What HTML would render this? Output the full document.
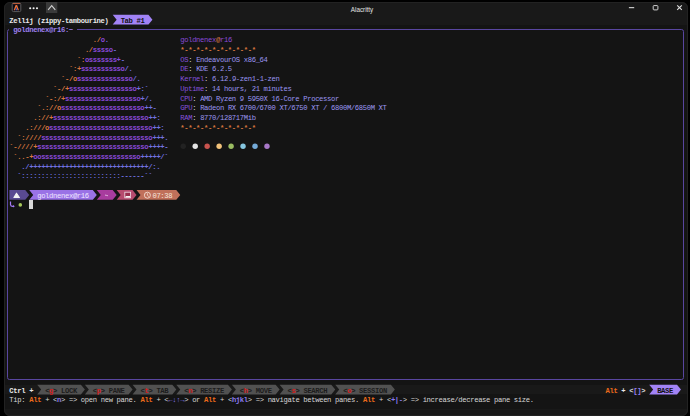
<!DOCTYPE html>
<html><head><meta charset="utf-8"><style>
html,body{margin:0;padding:0;width:690px;height:416px;overflow:hidden;background:#000}
#win{position:absolute;left:3.5px;top:1.5px;width:684px;height:414px;background:#141414;border-radius:6px;overflow:hidden}
#tb{position:absolute;left:3.5px;top:1.5px;width:684px;height:23.08px;background:#191919;border-radius:6px 6px 0 0}
#bb{position:absolute;left:3.5px;top:409px;width:684px;height:6.5px;background:#181818;border-radius:0 0 6px 6px}
#fr{position:absolute;left:3.5px;top:1.5px;width:682px;height:412px;border:1px solid #222222;border-radius:6px}
#sb{position:absolute;left:3.5px;top:384.67px;width:684px;height:9.73px;background:#191919}
#pane{position:absolute;left:7px;top:29px;width:677px;height:351px;background:#161616}
.t{position:absolute;font-family:"Liberation Mono",monospace;font-size:7.2px;letter-spacing:-0.347px;line-height:9.732px;white-space:pre;}
</style></head><body>
<div id="win"></div>
<div id="tb"></div><div id="sb"></div><div id="bb"></div><div id="fr"></div>

<svg style="position:absolute;left:0;top:0" width="690" height="20">
<rect x="12.2" y="3.2" width="8.6" height="8.4" rx="1.3" fill="#0c0c16" stroke="#646464" stroke-width="0.9"/>
<rect x="12.8" y="3.2" width="7.4" height="0.9" fill="#d0603a"/>
<path d="M13.6 10.2 L15.6 5 L17.1 5 L19 10.2 L17.6 10.2 L16.4 6.9 L15 10.2 Z" fill="#e8703a"/>
<path d="M15.5 10.2 L16.4 7.6 L17.3 10.2 Z" fill="#3a62d8"/>
<circle cx="30.2" cy="8.3" r="1.05" fill="#f2f2f2"/><circle cx="33.6" cy="8.3" r="1.05" fill="#f2f2f2"/><circle cx="37" cy="8.3" r="1.05" fill="#f2f2f2"/>
<rect x="46" y="2" width="11.3" height="11" fill="#3a3a3a"/>
<path d="M48.1 9.9 L51.7 5.6 L55.3 9.9" stroke="#d0d0d0" stroke-width="1.1" fill="none"/>
<rect x="628.9" y="7.1" width="5.3" height="1.1" fill="#d8d8d8"/>
<rect x="653.2" y="5.6" width="4.7" height="4.3" rx="0.8" stroke="#d0d0d0" stroke-width="1" fill="none"/>
<path d="M677.2 5.3 L681.8 9.9 M681.8 5.3 L677.2 9.9" stroke="#e0e0e0" stroke-width="1.1"/>
</svg>
<div style="position:absolute;left:312px;top:4.6px;width:100px;text-align:center;font:6.3px 'Liberation Sans',sans-serif;color:#e4e4e4;line-height:9px">Alacritty</div>


<div style="position:absolute;left:7px;top:29px;width:675px;height:349px;border:1px solid #5946a0;border-radius:2.5px"></div>
<div style="position:absolute;left:9.37px;top:28px;width:67.56px;height:3px;background:#141414"></div>

<svg style="position:absolute;left:0;top:0" width="690" height="416"><polygon points="112.70,14.85 148.46,14.85 152.44,19.72 148.46,24.58 112.70,24.58 116.67,19.72" fill="#a283f6"/><circle cx="183.25" cy="146.3" r="2.7" fill="#222222"/><circle cx="195.21" cy="146.3" r="2.7" fill="#e4e4e4"/><circle cx="207.17" cy="146.3" r="2.7" fill="#c9534e"/><circle cx="219.13" cy="146.3" r="2.7" fill="#f2c27a"/><circle cx="231.09" cy="146.3" r="2.7" fill="#9bbd62"/><circle cx="243.05" cy="146.3" r="2.7" fill="#86c6e0"/><circle cx="255.01" cy="146.3" r="2.7" fill="#74aad8"/><circle cx="266.97" cy="146.3" r="2.7" fill="#a878c8"/><polygon points="9.37,190.03 25.27,190.03 29.24,194.89 25.27,199.76 9.37,199.76" fill="#594a91"/><polygon points="29.24,190.03 92.83,190.03 96.80,194.89 92.83,199.76 29.24,199.76 33.22,194.89" fill="#9a72e6"/><polygon points="96.80,190.03 112.70,190.03 116.67,194.89 112.70,199.76 96.80,199.76 100.78,194.89" fill="#a83c9e"/><polygon points="116.67,190.03 132.57,190.03 136.54,194.89 132.57,199.76 116.67,199.76 120.65,194.89" fill="#b64b6e"/><polygon points="136.54,190.03 176.28,190.03 180.26,194.89 176.28,199.76 136.54,199.76 140.52,194.89" fill="#c0705a"/><circle cx="20.3" cy="204.9" r="1.8" fill="#a6c85a"/><polygon points="37.19,384.67 80.91,384.67 84.88,389.53 80.91,394.40 37.19,394.40 41.17,389.53" fill="#515151"/><polygon points="84.88,384.67 128.59,384.67 132.57,389.53 128.59,394.40 84.88,394.40 88.85,389.53" fill="#515151"/><polygon points="132.57,384.67 172.31,384.67 176.28,389.53 172.31,394.40 132.57,394.40 136.54,389.53" fill="#515151"/><polygon points="176.28,384.67 227.94,384.67 231.92,389.53 227.94,394.40 176.28,394.40 180.26,389.53" fill="#515151"/><polygon points="231.92,384.67 275.63,384.67 279.61,389.53 275.63,394.40 231.92,394.40 235.89,389.53" fill="#515151"/><polygon points="279.61,384.67 331.27,384.67 335.24,389.53 331.27,394.40 279.61,394.40 283.58,389.53" fill="#515151"/><polygon points="335.24,384.67 390.88,384.67 394.85,389.53 390.88,394.40 335.24,394.40 339.22,389.53" fill="#515151"/><polygon points="649.19,384.67 677.01,384.67 680.98,389.53 677.01,394.40 649.19,394.40 653.16,389.53" fill="#a283f6"/></svg>

<svg style="position:absolute;left:0;top:0" width="690" height="416">
<path d="M13.9 197.5 L16.5 193.2 L19.4 197.5 Z" fill="#f2f2f2" stroke="#f2f2f2" stroke-width="1.1" stroke-linejoin="round"/>
<path d="M105 195.6 Q105.8 194.6 106.5 195.4 Q107.2 196.2 108 195.2" stroke="#f0d8f0" stroke-width="0.8" fill="none"/>
<rect x="124.8" y="192.2" width="5.8" height="5.6" fill="#9a2e4e" stroke="#f0e0e8" stroke-width="0.8"/>
<rect x="125.6" y="196" width="4.4" height="1.6" fill="#f4f0f0"/>
<circle cx="147.4" cy="195.2" r="3" stroke="#f4dcd0" stroke-width="0.9" fill="none"/>
<path d="M147.4 193.3 L147.4 195.3 L148.9 196.6" stroke="#f4dcd0" stroke-width="0.8" fill="none"/>
<path d="M10.5 201.6 L10.5 204.6 Q10.7 206.3 12.6 206.3 L13.6 206.3" stroke="#a67af6" stroke-width="1.2" fill="none"/><path d="M13 204.9 L14.8 206.3 L13 207.6 Z" fill="#a67af6"/>
</svg>

<span class="t" style="left:9.37px;top:16.75px;color:#e8e8e8;font-weight:bold;">Zellij (zippy-tambourine)</span><span class="t" style="left:120.65px;top:16.75px;color:#111111;font-weight:bold;">Tab #1</span><span class="t" style="left:13.35px;top:26.48px;color:#9d80f0;font-weight:bold;">goldnenex@r16:~</span><span class="t" style="left:92.83px;top:36.21px;color:#d9773f;font-weight:bold;">./</span><span class="t" style="left:100.78px;top:36.21px;color:#8a4ad8;font-weight:bold;">o</span><span class="t" style="left:104.75px;top:36.21px;color:#7272e0;font-weight:bold;">.</span><span class="t" style="left:84.88px;top:45.95px;color:#d9773f;font-weight:bold;">./</span><span class="t" style="left:92.83px;top:45.95px;color:#8a4ad8;font-weight:bold;">sssso</span><span class="t" style="left:112.70px;top:45.95px;color:#7272e0;font-weight:bold;">-</span><span class="t" style="left:76.93px;top:55.68px;color:#d9773f;font-weight:bold;">`:</span><span class="t" style="left:84.88px;top:55.68px;color:#8a4ad8;font-weight:bold;">osssssss+</span><span class="t" style="left:120.65px;top:55.68px;color:#7272e0;font-weight:bold;">-</span><span class="t" style="left:68.98px;top:65.41px;color:#d9773f;font-weight:bold;">`:+</span><span class="t" style="left:80.91px;top:65.41px;color:#8a4ad8;font-weight:bold;">sssssssssso</span><span class="t" style="left:124.62px;top:65.41px;color:#7272e0;font-weight:bold;">/.</span><span class="t" style="left:61.04px;top:75.14px;color:#d9773f;font-weight:bold;">`-/o</span><span class="t" style="left:76.93px;top:75.14px;color:#8a4ad8;font-weight:bold;">ssssssssssssso</span><span class="t" style="left:132.57px;top:75.14px;color:#7272e0;font-weight:bold;">/.</span><span class="t" style="left:53.09px;top:84.87px;color:#d9773f;font-weight:bold;">`-/+</span><span class="t" style="left:68.98px;top:84.87px;color:#8a4ad8;font-weight:bold;">sssssssssssssssso</span><span class="t" style="left:136.54px;top:84.87px;color:#7272e0;font-weight:bold;">+:`</span><span class="t" style="left:45.14px;top:94.61px;color:#d9773f;font-weight:bold;">`-:/+</span><span class="t" style="left:65.01px;top:94.61px;color:#8a4ad8;font-weight:bold;">sssssssssssssssssso</span><span class="t" style="left:140.52px;top:94.61px;color:#7272e0;font-weight:bold;">+/.</span><span class="t" style="left:37.19px;top:104.34px;color:#d9773f;font-weight:bold;">`.://o</span><span class="t" style="left:61.04px;top:104.34px;color:#8a4ad8;font-weight:bold;">sssssssssssssssssssso</span><span class="t" style="left:144.49px;top:104.34px;color:#7272e0;font-weight:bold;">++-</span><span class="t" style="left:33.22px;top:114.07px;color:#d9773f;font-weight:bold;">.://+</span><span class="t" style="left:53.09px;top:114.07px;color:#8a4ad8;font-weight:bold;">ssssssssssssssssssssssso</span><span class="t" style="left:148.46px;top:114.07px;color:#7272e0;font-weight:bold;">++:</span><span class="t" style="left:25.27px;top:123.80px;color:#d9773f;font-weight:bold;">.:///o</span><span class="t" style="left:49.11px;top:123.80px;color:#8a4ad8;font-weight:bold;">ssssssssssssssssssssssssso</span><span class="t" style="left:152.44px;top:123.80px;color:#7272e0;font-weight:bold;">++:</span><span class="t" style="left:17.32px;top:133.53px;color:#d9773f;font-weight:bold;">`:////</span><span class="t" style="left:41.17px;top:133.53px;color:#8a4ad8;font-weight:bold;">ssssssssssssssssssssssssssso</span><span class="t" style="left:152.44px;top:133.53px;color:#7272e0;font-weight:bold;">+++.</span><span class="t" style="left:9.37px;top:143.27px;color:#d9773f;font-weight:bold;">`-////+</span><span class="t" style="left:37.19px;top:143.27px;color:#8a4ad8;font-weight:bold;">ssssssssssssssssssssssssssso</span><span class="t" style="left:148.46px;top:143.27px;color:#7272e0;font-weight:bold;">++++-</span><span class="t" style="left:13.35px;top:153.00px;color:#d9773f;font-weight:bold;">`..-+</span><span class="t" style="left:33.22px;top:153.00px;color:#8a4ad8;font-weight:bold;">oosssssssssssssssssssssssso</span><span class="t" style="left:140.52px;top:153.00px;color:#7272e0;font-weight:bold;">+++++/`</span><span class="t" style="left:21.30px;top:162.73px;color:#7272e0;font-weight:bold;">./++++++++++++++++++++++++++++++/:.</span><span class="t" style="left:17.32px;top:172.46px;color:#7272e0;font-weight:bold;">`:::::::::::::::::::::::::------``</span><span class="t" style="left:180.26px;top:36.21px;color:#8a4ad8;">goldnenex</span><span class="t" style="left:216.02px;top:36.21px;color:#d9773f;">@</span><span class="t" style="left:220.00px;top:36.21px;color:#8a4ad8;">r16</span><span class="t" style="left:180.26px;top:45.95px;color:#d9773f;font-weight:bold;">*-*-*-*-*-*-*-*-*-*</span><span class="t" style="left:180.26px;top:55.68px;color:#8652dc;">OS</span><span class="t" style="left:188.20px;top:55.68px;color:#d6d6d6;">:</span><span class="t" style="left:196.15px;top:55.68px;color:#9c96f2;">EndeavourOS x86_64</span><span class="t" style="left:180.26px;top:65.41px;color:#8652dc;">DE</span><span class="t" style="left:188.20px;top:65.41px;color:#d6d6d6;">:</span><span class="t" style="left:196.15px;top:65.41px;color:#9c96f2;">KDE 6.2.5</span><span class="t" style="left:180.26px;top:75.14px;color:#8652dc;">Kernel</span><span class="t" style="left:204.10px;top:75.14px;color:#d6d6d6;">:</span><span class="t" style="left:212.05px;top:75.14px;color:#9c96f2;">6.12.9-zen1-1-zen</span><span class="t" style="left:180.26px;top:84.87px;color:#8652dc;">Uptime</span><span class="t" style="left:204.10px;top:84.87px;color:#d6d6d6;">:</span><span class="t" style="left:212.05px;top:84.87px;color:#9c96f2;">14 hours, 21 minutes</span><span class="t" style="left:180.26px;top:94.61px;color:#8652dc;">CPU</span><span class="t" style="left:192.18px;top:94.61px;color:#d6d6d6;">:</span><span class="t" style="left:200.13px;top:94.61px;color:#9c96f2;">AMD Ryzen 9 5950X 16-Core Processor</span><span class="t" style="left:180.26px;top:104.34px;color:#8652dc;">GPU</span><span class="t" style="left:192.18px;top:104.34px;color:#d6d6d6;">:</span><span class="t" style="left:200.13px;top:104.34px;color:#9c96f2;">Radeon RX 6700/6700 XT/6750 XT / 6800M/6850M XT</span><span class="t" style="left:180.26px;top:114.07px;color:#8652dc;">RAM</span><span class="t" style="left:192.18px;top:114.07px;color:#d6d6d6;">:</span><span class="t" style="left:200.13px;top:114.07px;color:#9c96f2;">8770/128717Mib</span><span class="t" style="left:180.26px;top:123.80px;color:#d9773f;font-weight:bold;">*-*-*-*-*-*-*-*-*-*</span><span class="t" style="left:37.19px;top:191.93px;color:#efe6ff;">goldnenex@r16</span><span class="t" style="left:152.44px;top:191.93px;color:#f4e4dc;">07:38</span><div style="position:absolute;left:29.24px;top:199.76px;width:3.97px;height:9.73px;background:#d8d8d8"></div><span class="t" style="left:9.37px;top:386.57px;color:#e8e8e8;font-weight:bold;">Ctrl +</span><span class="t" style="left:45.14px;top:386.57px;color:#1c1c1c;font-weight:bold;">&lt;</span><span class="t" style="left:49.11px;top:386.57px;color:#d41a1a;font-weight:bold;">g</span><span class="t" style="left:53.09px;top:386.57px;color:#1c1c1c;font-weight:bold;">&gt;</span><span class="t" style="left:61.04px;top:386.57px;color:#1c1c1c;font-weight:bold;">LOCK</span><span class="t" style="left:92.83px;top:386.57px;color:#1c1c1c;font-weight:bold;">&lt;</span><span class="t" style="left:96.80px;top:386.57px;color:#d41a1a;font-weight:bold;">p</span><span class="t" style="left:100.78px;top:386.57px;color:#1c1c1c;font-weight:bold;">&gt;</span><span class="t" style="left:108.72px;top:386.57px;color:#1c1c1c;font-weight:bold;">PANE</span><span class="t" style="left:140.52px;top:386.57px;color:#1c1c1c;font-weight:bold;">&lt;</span><span class="t" style="left:144.49px;top:386.57px;color:#d41a1a;font-weight:bold;">t</span><span class="t" style="left:148.46px;top:386.57px;color:#1c1c1c;font-weight:bold;">&gt;</span><span class="t" style="left:156.41px;top:386.57px;color:#1c1c1c;font-weight:bold;">TAB</span><span class="t" style="left:184.23px;top:386.57px;color:#1c1c1c;font-weight:bold;">&lt;</span><span class="t" style="left:188.20px;top:386.57px;color:#d41a1a;font-weight:bold;">n</span><span class="t" style="left:192.18px;top:386.57px;color:#1c1c1c;font-weight:bold;">&gt;</span><span class="t" style="left:200.13px;top:386.57px;color:#1c1c1c;font-weight:bold;">RESIZE</span><span class="t" style="left:239.87px;top:386.57px;color:#1c1c1c;font-weight:bold;">&lt;</span><span class="t" style="left:243.84px;top:386.57px;color:#d41a1a;font-weight:bold;">h</span><span class="t" style="left:247.81px;top:386.57px;color:#1c1c1c;font-weight:bold;">&gt;</span><span class="t" style="left:255.76px;top:386.57px;color:#1c1c1c;font-weight:bold;">MOVE</span><span class="t" style="left:287.55px;top:386.57px;color:#1c1c1c;font-weight:bold;">&lt;</span><span class="t" style="left:291.53px;top:386.57px;color:#d41a1a;font-weight:bold;">s</span><span class="t" style="left:295.50px;top:386.57px;color:#1c1c1c;font-weight:bold;">&gt;</span><span class="t" style="left:303.45px;top:386.57px;color:#1c1c1c;font-weight:bold;">SEARCH</span><span class="t" style="left:343.19px;top:386.57px;color:#1c1c1c;font-weight:bold;">&lt;</span><span class="t" style="left:347.16px;top:386.57px;color:#d41a1a;font-weight:bold;">o</span><span class="t" style="left:351.14px;top:386.57px;color:#1c1c1c;font-weight:bold;">&gt;</span><span class="t" style="left:359.09px;top:386.57px;color:#1c1c1c;font-weight:bold;">SESSION</span><span class="t" style="left:605.47px;top:386.57px;color:#ec6a1a;font-weight:bold;">Alt</span><span class="t" style="left:621.37px;top:386.57px;color:#e8e8e8;font-weight:bold;">+</span><span class="t" style="left:629.32px;top:386.57px;color:#d6d6d6;font-weight:bold;">&lt;</span><span class="t" style="left:633.29px;top:386.57px;color:#9a80f0;font-weight:bold;">[]</span><span class="t" style="left:641.24px;top:386.57px;color:#d6d6d6;font-weight:bold;">&gt;</span><span class="t" style="left:657.14px;top:386.57px;color:#111111;font-weight:bold;">BASE</span><span class="t" style="left:9.37px;top:396.30px;color:#d6d6d6;">Tip: </span><span class="t" style="left:29.24px;top:396.30px;color:#ec6a1a;font-weight:bold;">Alt</span><span class="t" style="left:45.14px;top:396.30px;color:#d6d6d6;">+ </span><span class="t" style="left:53.09px;top:396.30px;color:#d6d6d6;">&lt;</span><span class="t" style="left:57.06px;top:396.30px;color:#8a7af0;font-weight:bold;">n</span><span class="t" style="left:61.04px;top:396.30px;color:#d6d6d6;">&gt; =&gt; open new pane. </span><span class="t" style="left:140.52px;top:396.30px;color:#ec6a1a;font-weight:bold;">Alt</span><span class="t" style="left:156.41px;top:396.30px;color:#d6d6d6;">+ </span><span class="t" style="left:164.36px;top:396.30px;color:#d6d6d6;">&lt;</span><span class="t" style="left:168.33px;top:396.30px;color:#8a7af0;font-weight:bold;">←↓↑→</span><span class="t" style="left:184.23px;top:396.30px;color:#d6d6d6;">&gt; or </span><span class="t" style="left:204.10px;top:396.30px;color:#ec6a1a;font-weight:bold;">Alt</span><span class="t" style="left:220.00px;top:396.30px;color:#d6d6d6;">+ </span><span class="t" style="left:227.94px;top:396.30px;color:#d6d6d6;">&lt;</span><span class="t" style="left:231.92px;top:396.30px;color:#8a7af0;font-weight:bold;">hjkl</span><span class="t" style="left:247.81px;top:396.30px;color:#d6d6d6;">&gt; =&gt; navigate between panes. </span><span class="t" style="left:363.06px;top:396.30px;color:#ec6a1a;font-weight:bold;">Alt</span><span class="t" style="left:378.96px;top:396.30px;color:#d6d6d6;">+ </span><span class="t" style="left:386.90px;top:396.30px;color:#d6d6d6;">&lt;</span><span class="t" style="left:390.88px;top:396.30px;color:#8a7af0;font-weight:bold;">+|-</span><span class="t" style="left:402.80px;top:396.30px;color:#d6d6d6;">&gt; =&gt; increase/decrease pane size.</span>
</body></html>
